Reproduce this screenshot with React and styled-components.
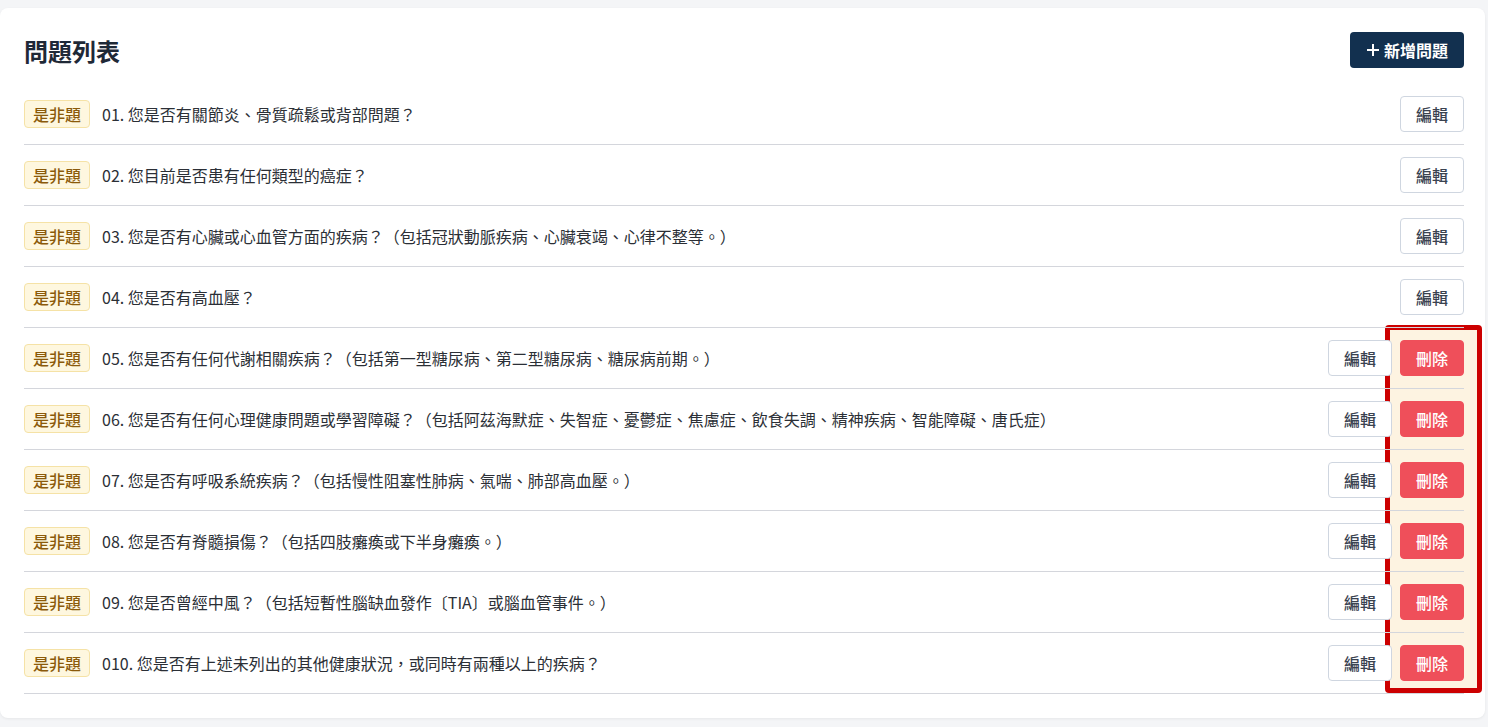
import React from "react"
import styled, { createGlobalStyle } from "styled-components"

const GlobalStyle = createGlobalStyle`
  html, body {
    margin: 0;
    padding: 0;
    background: #f4f5f7;
    font-family: "Noto Sans CJK TC", "Noto Sans", sans-serif;
  }
`

const questions = [
  { no: "01", text: "您是否有關節炎、骨質疏鬆或背部問題？", removable: false },
  { no: "02", text: "您目前是否患有任何類型的癌症？", removable: false },
  { no: "03", text: "您是否有心臟或心血管方面的疾病？（包括冠狀動脈疾病、心臟衰竭、心律不整等。）", removable: false },
  { no: "04", text: "您是否有高血壓？", removable: false },
  { no: "05", text: "您是否有任何代謝相關疾病？（包括第一型糖尿病、第二型糖尿病、糖尿病前期。）", removable: true },
  { no: "06", text: "您是否有任何心理健康問題或學習障礙？（包括阿茲海默症、失智症、憂鬱症、焦慮症、飲食失調、精神疾病、智能障礙、唐氏症）", removable: true },
  { no: "07", text: "您是否有呼吸系統疾病？（包括慢性阻塞性肺病、氣喘、肺部高血壓。）", removable: true },
  { no: "08", text: "您是否有脊髓損傷？（包括四肢癱瘓或下半身癱瘓。）", removable: true },
  { no: "09", text: "您是否曾經中風？（包括短暫性腦缺血發作〔TIA〕或腦血管事件。）", removable: true },
  { no: "010", text: "您是否有上述未列出的其他健康狀況，或同時有兩種以上的疾病？", removable: true },
]

export default function App() {
  return (
    <>
      <GlobalStyle />
      <Page>
        <Card>
          <Highlight />
          <Header>
            <Title>問題列表</Title>
            <AddButton>
              <svg width="14" height="14" viewBox="0 0 14 14">
                <path d="M7 1v12M1 7h12" stroke="#fff" strokeWidth="2" />
              </svg>
              新增問題
            </AddButton>
          </Header>
          <List>
            {questions.map((q) => (
              <Row key={q.no}>
                <Badge>是非題</Badge>
                <Question>{q.no}. {q.text}</Question>
                <Actions>
                  <Button>編輯</Button>
                  {q.removable && <Button $danger>刪除</Button>}
                </Actions>
              </Row>
            ))}
          </List>
        </Card>
      </Page>
    </>
  )
}

const Page = styled.div`
  padding: 8px 3px 9px 0;
`

const Card = styled.div`
  position: relative;
  background: #fff;
  border-radius: 8px;
  box-shadow: 0 1px 3px rgba(0, 0, 0, 0.06);
  padding: 24px 21px 24px 24px;
`

const Highlight = styled.div`
  position: absolute;
  left: 1385px;
  top: 317px;
  width: 87px;
  height: 358px;
  border: 5px solid #cc0000;
  border-radius: 4px;
  background: #fdf3e1;
  z-index: 0;
  pointer-events: none;
`

const Header = styled.div`
  position: relative;
  z-index: 1;
  display: flex;
  align-items: center;
  justify-content: space-between;
  margin-bottom: 16px;
`

const Title = styled.h1`
  margin: 0;
  font-size: 24px;
  font-weight: 700;
  color: #1f2937;
`

const AddButton = styled.button`
  display: flex;
  align-items: center;
  gap: 4px;
  height: 36px;
  padding: 0 16px;
  border: none;
  border-radius: 4px;
  background: #12304f;
  color: #fff;
  font-family: inherit;
  font-size: 16px;
  font-weight: 600;
`

const List = styled.div`
  position: relative;
  z-index: 1;
  display: flex;
  flex-direction: column;
`

const Row = styled.div`
  display: flex;
  align-items: center;
  gap: 12px;
  height: 60px;
  border-bottom: 1px solid #d4d6dc;
`

const Badge = styled.span`
  flex-shrink: 0;
  height: 26px;
  line-height: 26px;
  padding: 0 8px;
  border: 1px solid #f5e2a6;
  border-radius: 4px;
  background: #fef7df;
  color: #8b5a0a;
  font-size: 16px;
  font-weight: 500;
`

const Question = styled.span`
  flex: 1;
  font-size: 16px;
  color: #2b2f36;
  white-space: nowrap;
`

const Actions = styled.div`
  display: flex;
  gap: 8px;
`

const Button = styled.button`
  width: 64px;
  height: 36px;
  border-radius: 4px;
  font-family: inherit;
  font-size: 16px;
  font-weight: 500;
  border: 1px solid ${(p) => (p.$danger ? "#ef4f5a" : "#cfd6e0")};
  background: ${(p) => (p.$danger ? "#ef4f5a" : "#fff")};
  color: ${(p) => (p.$danger ? "#fff" : "#3a4250")};
`
